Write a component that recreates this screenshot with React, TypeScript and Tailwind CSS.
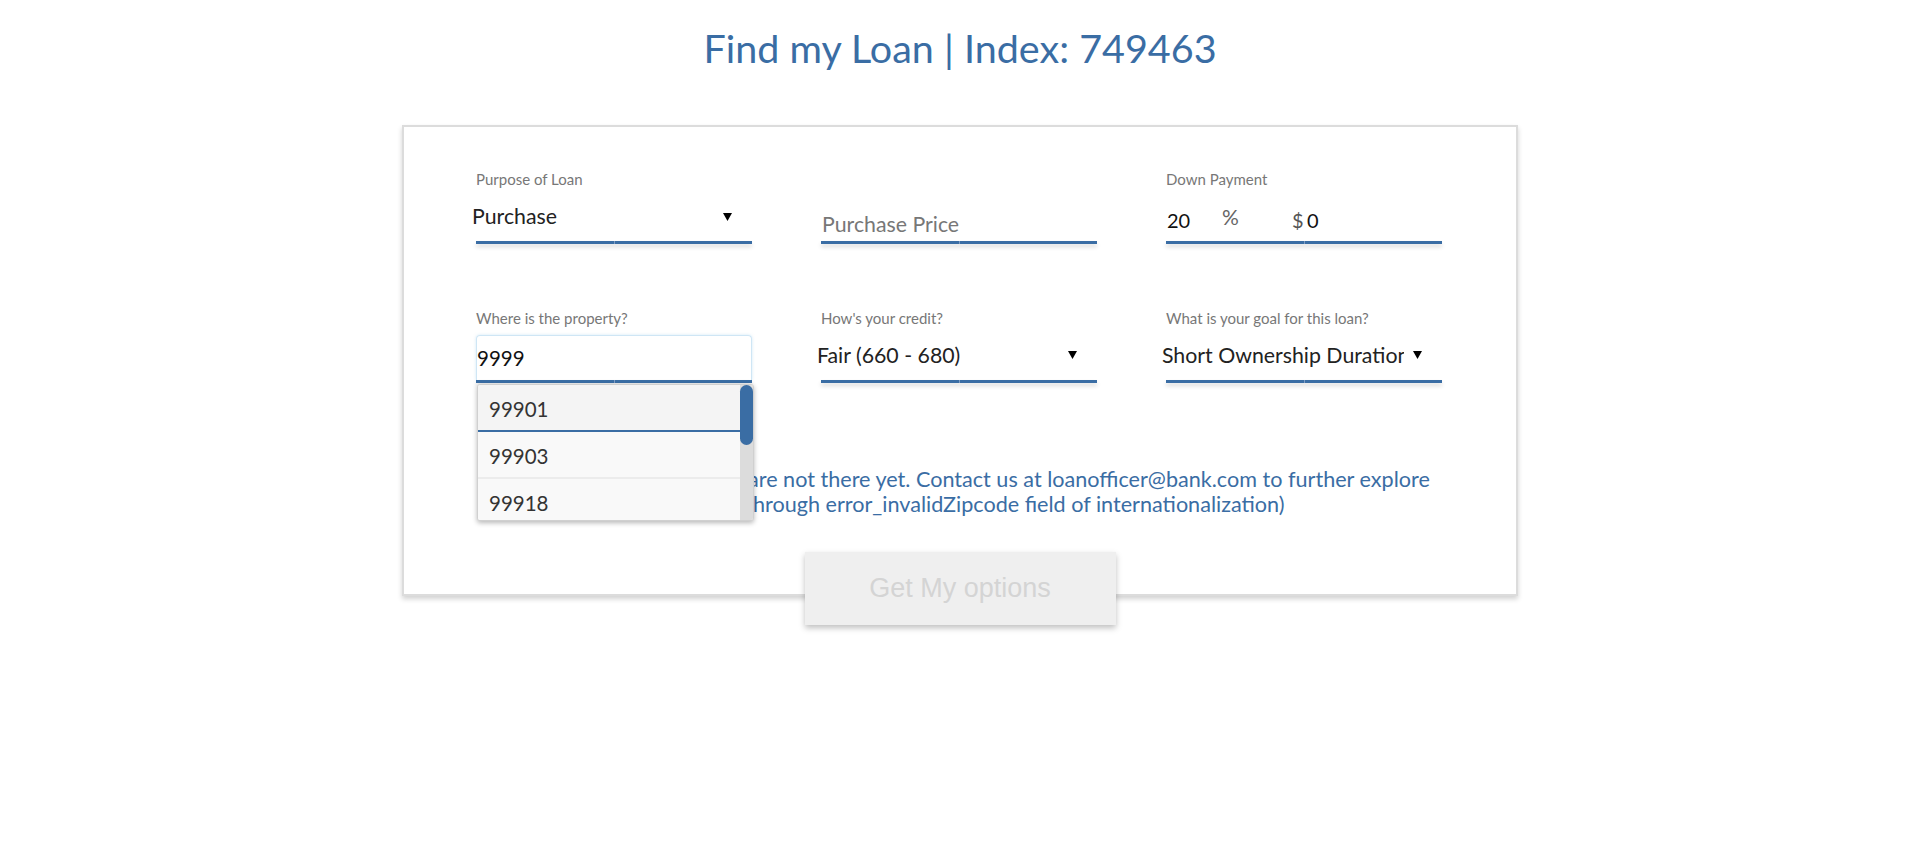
import type { ReactNode } from "react";

const Arrow = () => (
   <svg width="9" height="8" viewBox="0 0 9 8" className="shrink-0">
      <path d="M0 0h9L4.5 8z" fill="#000" />
   </svg>
);

const Underline = () => (
   <div className="flex h-[3px] shadow-[0_3px_4px_rgba(0,0,0,0.16)]">
      <div className="flex-1 bg-[#3a6da4]" />
      <div className="w-px bg-[#7d9cc4]" />
      <div className="flex-1 bg-[#3a6da4]" />
   </div>
);

const Field = ({ label, children }: { label?: string; children: ReactNode }) => (
   <div className="relative flex flex-col">
      <div className="h-4 text-[15px] leading-4 text-[#777]">{label}</div>
      <div className="flex h-[54px] items-end">{children}</div>
      <Underline />
   </div>
);

const Select = ({ value, arrowMb }: { value: string; arrowMb: string }) => (
   <div className="flex w-full items-end pr-[20px]">
      <div className="ml-[-4px] min-w-0 flex-1 overflow-hidden whitespace-nowrap pb-[13px] text-[21.3px] leading-6 text-[#222]">
         {value}
      </div>
      <div className={`ml-[9px] ${arrowMb}`}>
         <Arrow />
      </div>
   </div>
);

const zips = ["99901", "99903", "99918"];

const App = () => {
   return (
      <div className="min-h-screen bg-white font-['Lato',sans-serif] text-[#333]">
         <h1 className="pt-[24px] text-center text-[39.5px] font-normal leading-[48px] text-[#3a6da4]">
            Find my Loan | Index: 749463
         </h1>

         <div className="mx-auto mt-[53px] flex w-[1116px] flex-col border-2 border-[#dcdcdc] bg-white px-[72px] pt-[44px] shadow-[0_3px_5px_rgba(0,0,0,0.18)]">
            <div className="grid grid-cols-[repeat(3,276px)] gap-x-[69px] gap-y-[66px]">
               <Field label="Purpose of Loan">
                  <Select value="Purchase" arrowMb="mb-[20px]" />
               </Field>

               <Field>
                  <div className="ml-px pb-[5px] text-[21.3px] leading-6 text-[#777]">
                     Purchase Price
                  </div>
               </Field>

               <Field label="Down Payment">
                  <div className="ml-px flex items-end pb-[9px] text-[20px] leading-6">
                     <span className="w-[55px] text-[#111]">20</span>
                     <span className="mb-[3px] w-[70px] text-[21px] text-[#666]">%</span>
                     <span className="w-[15px] text-[#555]">$</span>
                     <span className="text-[#111]">0</span>
                  </div>
               </Field>

               <Field label="Where is the property?">
                  <div className="flex h-[45px] w-full items-end rounded-t-[4px] border border-b-0 border-[#cfe6f5] pb-[10px] text-[20.5px] leading-6 text-[#111] shadow-[0_0_3px_rgba(160,210,240,0.5)]">
                     9999
                  </div>
                  <div className="absolute left-px top-[calc(100%+1px)] z-10 flex h-[137px] w-[277px] overflow-hidden rounded-[3px] border border-[#d0d0d0] bg-[#f9f9f9] shadow-[0_2px_5px_rgba(0,0,0,0.28)]">
                     <div className="flex flex-1 flex-col">
                        {zips.map((z, i) => (
                           <div
                              key={z}
                              className={`flex h-[47px] shrink-0 items-center border-b-2 pl-[11px] pt-[4px] text-[20.5px] text-[#333] ${
                                 i === 0
                                    ? "border-[#3a6da4] bg-[#f4f4f4]"
                                    : "border-[#ececec] bg-[#f9f9f9]"
                              }`}
                           >
                              {z}
                           </div>
                        ))}
                     </div>
                     <div className="w-[13px] bg-[#dcdcdc]">
                        <div className="h-[60px] rounded-full bg-[#3a6da4]" />
                     </div>
                  </div>
               </Field>

               <Field label="How's your credit?">
                  <Select value="Fair (660 - 680)" arrowMb="mb-[21px]" />
               </Field>

               <Field label="What is your goal for this loan?">
                  <Select value="Short Ownership Duration" arrowMb="mb-[21px]" />
               </Field>
            </div>

            <div className="mt-[84px] text-[21.6px] leading-[25px] text-[#3a6da4]">
               <div className="flex">
                  <span className="flex w-[272px] shrink-0 justify-end overflow-hidden whitespace-nowrap pr-[5px]">
                     Sorry, we
                  </span>
                  <span className="whitespace-nowrap">
                     are not there yet. Contact us at loanofficer@bank.com to further explore
                  </span>
               </div>
               <div className="flex">
                  <span className="flex w-[277px] shrink-0 justify-end overflow-hidden whitespace-nowrap">
                     (Set this t
                  </span>
                  <span className="whitespace-nowrap">
                     hrough error_invalidZipcode field of internationalization)
                  </span>
               </div>
            </div>

            <button
               type="button"
               className="mx-auto mb-[-31px] mt-[35px] h-[73px] w-[311px] bg-[#efefef] font-['Liberation_Sans',Arial,sans-serif] text-[27px] text-[#d4d4d4] shadow-[0_3px_6px_rgba(0,0,0,0.25)]"
            >
               Get My options
            </button>
         </div>
      </div>
   );
};

export default App;
